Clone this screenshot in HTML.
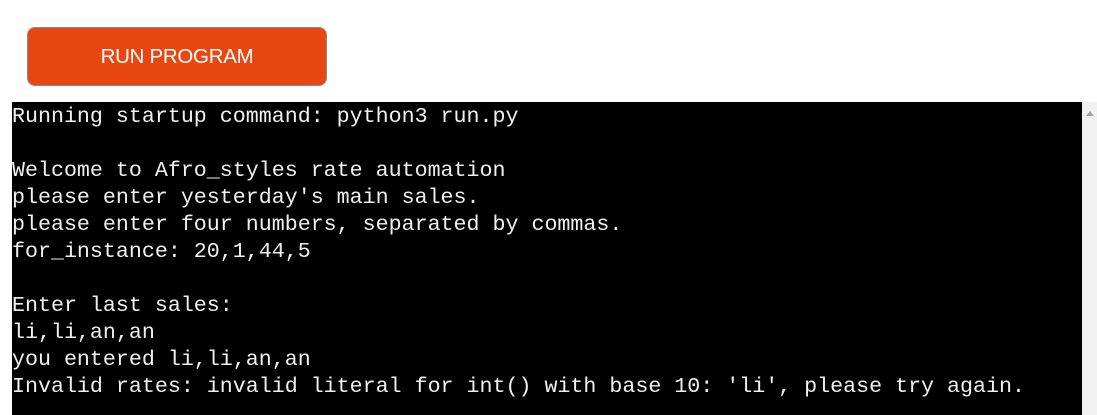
<!DOCTYPE html>
<html><head><style>
html,body{margin:0;padding:0;background:#fff;width:1097px;height:415px;overflow:hidden}
.btn{position:absolute;left:27px;top:27px;width:298px;height:57px;background:#e84712;border:1px solid #8a8a8a;border-radius:8px;color:#fff;font-family:"Liberation Sans",sans-serif;font-size:20.5px;text-align:center;line-height:58px;letter-spacing:-0.3px}
.term{position:absolute;left:12px;top:102px;width:1070px;height:313px;background:#000;overflow:hidden}
pre{margin:0;padding-top:1px;color:#f0f0f0;font-family:"Liberation Mono","Courier New",monospace;font-size:21.65px;line-height:27px;letter-spacing:0}
.sb{position:absolute;left:1082px;top:102px;width:15px;height:313px;background:#f1f1f1}
.arr{position:absolute;left:1086px;top:111px;width:0;height:0;border-left:4px solid transparent;border-right:4px solid transparent;border-bottom:5px solid #a3a3a3}
</style></head><body>
<div class="btn">RUN PROGRAM</div>
<div class="term"><pre>Running startup command: python3 run.py

Welcome to Afro_styles rate automation
please enter yesterday's main sales.
please enter four numbers, separated by commas.
for_instance: 20,1,44,5

Enter last sales:
li,li,an,an
you entered li,li,an,an
Invalid rates: invalid literal for int() with base 10: 'li', please try again.</pre></div>
<div class="sb"></div><div class="arr"></div>
</body></html>
